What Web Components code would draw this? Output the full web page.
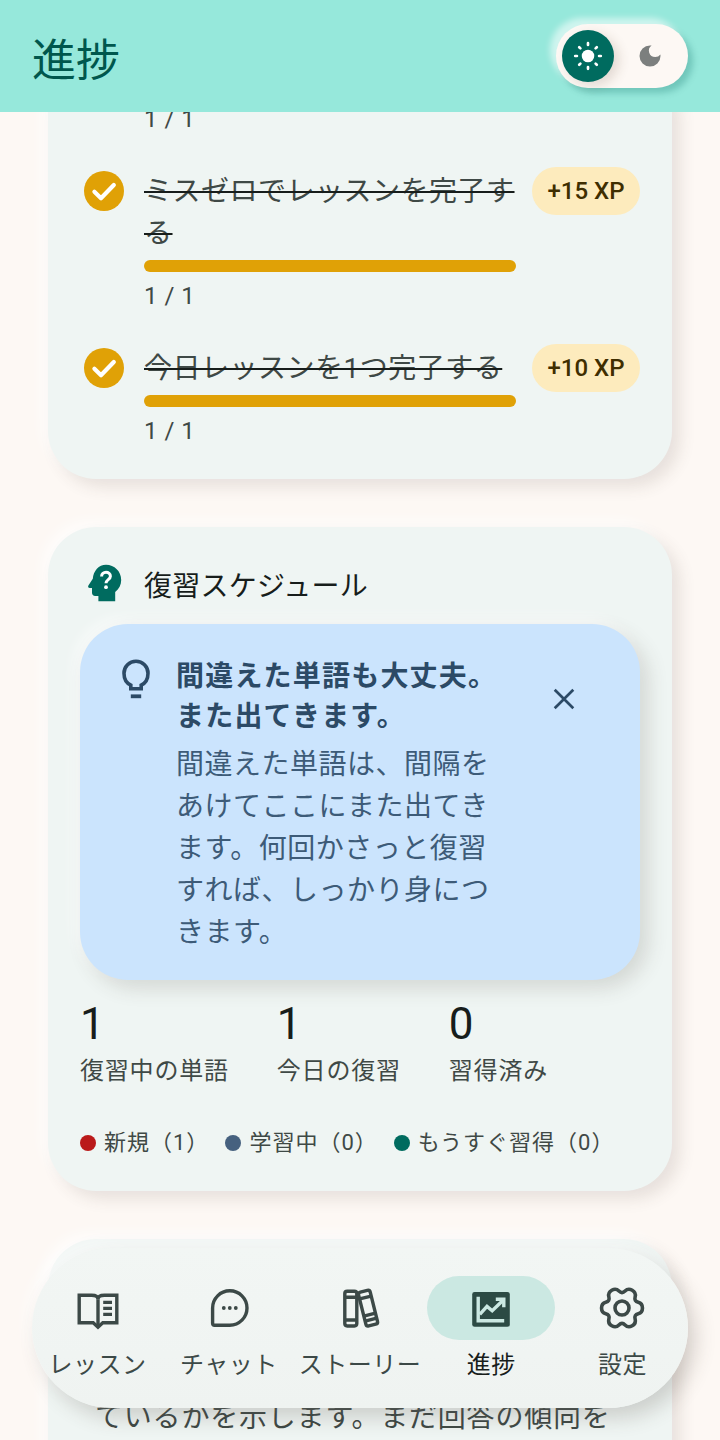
<!doctype html>
<html lang="ja"><head><meta charset="utf-8"><title>進捗</title>
<style>
html,body{margin:0;padding:0;background:#fdf8f4}
body{font-family:Roboto,"Noto Sans CJK JP",sans-serif;color:#171d1b}
</style></head><body>
<app-shell>
  <top-bar slot="top" heading="進捗"></top-bar>
  <surface-card class="quests">
    <quest-row clipped done="1" label=""></quest-row>
    <quest-row label="ミスゼロでレッスンを完了する" xp="+15 XP"></quest-row>
    <quest-row label="今日レッスンを1つ完了する" xp="+10 XP"></quest-row>
  </surface-card>
  <surface-card>
    <review-head>復習スケジュール</review-head>
    <tip-box heading="間違えた単語も大丈夫。また出てきます。">間違えた単語は、間隔をあけてここにまた出てきます。何回かさっと復習すれば、しっかり身につきます。</tip-box>
    <stat-row>
      <stat-item value="1" label="復習中の単語"></stat-item>
      <stat-item value="1" label="今日の復習"></stat-item>
      <stat-item value="0" label="習得済み"></stat-item>
    </stat-row>
    <legend-row>
      <legend-item color="#ba1a1a">新規（1）</legend-item>
      <legend-item color="#46617f">学習中（0）</legend-item>
      <legend-item color="#006b5f">もうすぐ習得（0）</legend-item>
    </legend-row>
  </surface-card>
  <surface-card class="last"><clip-text>ているかを示します。まだ回答の傾向を</clip-text></surface-card>
  <bottom-nav slot="nav">
    <nav-item icon="book" label="レッスン"></nav-item>
    <nav-item icon="chat" label="チャット"></nav-item>
    <nav-item icon="books" label="ストーリー"></nav-item>
    <nav-item icon="chart" label="進捗" active></nav-item>
    <nav-item icon="gear" label="設定"></nav-item>
  </bottom-nav>
</app-shell>
<script>
function gearPath(){
  const c=12,pts=[];
  for(let k=0;k<6;k++){const a=k*60;
    [[a-13,10.5],[a+13,10.5],[a+30,6.9]].forEach(([d,r])=>{const t=d*Math.PI/180;pts.push([c+r*Math.cos(t),c+r*Math.sin(t)])});
  }
  const mid=(p,q)=>[(p[0]+q[0])/2,(p[1]+q[1])/2],f=n=>n.toFixed(2);
  let s=mid(pts[pts.length-1],pts[0]),d=`M${f(s[0])} ${f(s[1])}`;
  pts.forEach((p,i)=>{const m=mid(p,pts[(i+1)%pts.length]);d+=`Q${f(p[0])} ${f(p[1])} ${f(m[0])} ${f(m[1])}`});
  return d+'z';
}
const ICONS={
 book:`<g fill="none" stroke="currentColor" stroke-width="1.7"><path d="M2.6 5.6h6.2c1.7 0 3.2.6 3.2 2 0-1.4 1.5-2 3.2-2h6.2v13.8h-7L12 21.6l-2.4-2.2h-7z"/><path d="M12 7.6v13"/><path d="M14.6 9.2h4.4M14.6 12.2h4.4M14.6 15.2h4.4"/></g>`,
 chat:`<path fill="none" stroke="currentColor" stroke-width="1.7" d="M12.4 3.4a8.6 8.6 0 0 1 0 17.2H4.8a1 1 0 0 1-1-1V12a8.6 8.6 0 0 1 8.6-8.6z"/><g fill="currentColor"><circle cx="9.4" cy="12" r=".95"/><circle cx="12.4" cy="12" r=".95"/><circle cx="15.4" cy="12" r=".95"/></g>`,
 books:`<g fill="none" stroke="currentColor" stroke-width="1.7"><rect x="4.4" y="3.6" width="6" height="17.4" rx="1.2"/><path d="M4.4 6.6h6M4.4 18h6"/><g transform="rotate(-14 16 12)"><rect x="13" y="3.4" width="6" height="17.4" rx="1.2"/><path d="M13 6.6h6M13 15.4h6M13 18h6"/></g></g>`,
 chart:`<rect x="2.6" y="4" width="18.8" height="17.4" rx="1.2" fill="currentColor"/><g fill="none" stroke="#cbe8e2" stroke-width="1.7"><path d="M5.6 6.4v12h13"/><path d="M6.4 15.2l3.6-4 2.6 2.2 5.2-5"/><path d="M14.4 7.6h4v4"/></g>`,
 gear:`<g fill="none" stroke="currentColor" stroke-width="1.8"><path d="${gearPath()}"/><circle cx="12" cy="12" r="3.5"/></g>`,
 head:`<path fill="currentColor" d="M13 2.4c4.2 0 7.6 3.3 7.6 7.6 0 2.4-1.1 4.5-3 6v4.6H9.2v-2.6H7.6c-1 0-1.6-.7-1.6-1.6V14H4.9c-.7 0-1.1-.7-.7-1.3L6.4 9.4C6.7 5.5 9.4 2.4 13 2.4z"/><g fill="none" stroke="#fff" stroke-width="1.5"><path d="M10.8 8.2c0-1.3 1-2.1 2.2-2.1s2.2.8 2.2 2c0 1.7-2.2 1.7-2.2 3.5"/></g><circle cx="13" cy="13.6" r=".95" fill="#fff"/>`,
 bulb:`<path fill="none" stroke="currentColor" stroke-width="1.8" d="M9.4 16.4v-1.8C7.4 13.6 6 11.4 6 8.6a6 6 0 0 1 12 0c0 2.8-1.4 5-3.4 6v1.8z"/><path fill="currentColor" d="M9.4 19.2h5.2v1.9H9.4z"/>`,
 close:`<path fill="none" stroke="currentColor" stroke-width="1.8" d="M5.8 5.8l12.4 12.4M18.2 5.8L5.8 18.2"/>`,
 check:`<circle cx="12" cy="12" r="10" fill="#e0a106"/><path fill="none" stroke="#fff" stroke-width="2.1" stroke-linecap="round" stroke-linejoin="round" d="M7.2 12.4l3.3 3.2 6.4-6.6"/>`,
 moon:`<path fill="currentColor" d="M12 3a9 9 0 1 0 9 9c0-.46-.04-.92-.1-1.36a5.39 5.39 0 0 1-4.4 2.26 5.4 5.4 0 0 1-3.14-9.8C13.92 3.04 12.46 3 12 3z"/>`,
 sun:`<circle cx="12" cy="12" r="4.7" fill="currentColor"/><g fill="none" stroke="currentColor" stroke-width="2" stroke-linecap="round"><path d="M12 2.4v1.3M12 20.3v1.3M2.4 12h1.3M20.3 12h1.3M5.4 5.4l.9.9M17.7 17.7l.9.9M5.4 18.6l.9-.9M17.7 6.3l.9-.9"/></g>`
};
class Base extends HTMLElement{
  css(){return''} html(){return'<slot></slot>'}
  connectedCallback(){ if(this.shadowRoot) return;
    this.attachShadow({mode:'open'}).innerHTML=`<style>${this.css()}</style>${this.html()}`; }
}
const def=(n,c)=>customElements.define(n,c);
def('ui-icon',class extends Base{
  css(){return`:host{display:block;width:var(--s,48px);height:var(--s,48px);flex:none}svg{display:block;width:100%;height:100%}`}
  html(){return`<svg viewBox="0 0 24 24" aria-hidden="true">${ICONS[this.getAttribute('name')]||''}</svg>`}
});
def('app-shell',class extends Base{
  css(){return`:host{display:block;position:relative;width:720px;height:1440px;overflow:hidden;background:#fdf8f4}
  .wrap{display:flex;flex-direction:column;height:100%}
  .scroll{flex:1;min-height:0;overflow:hidden;display:flex;flex-direction:column;gap:48px;padding:0 48px}
  ::slotted(.quests){margin-top:-48px}
  ::slotted(top-bar){position:relative;z-index:2}`}
  html(){return`<div class="wrap"><slot name="top"></slot><div class="scroll"><slot></slot></div></div><slot name="nav"></slot>`}
});
def('top-bar',class extends Base{
  css(){return`:host{display:flex;flex:none;align-items:center;justify-content:space-between;height:112px;padding:0 32px;box-sizing:border-box;background:#96e8db}
  h1{margin:10px 0 0;font:400 44px/56px Roboto,"Noto Sans CJK JP",sans-serif;color:#00574d}`}
  html(){return`<h1>${this.getAttribute('heading')}</h1><theme-toggle></theme-toggle>`}
});
def('theme-toggle',class extends Base{
  css(){return`:host{display:flex;align-items:center;width:132px;height:64px;box-sizing:border-box;padding:0 6px;border-radius:32px;background:#fdf8f4;
   box-shadow:-6px -6px 6px rgba(255,255,255,.55),5px 5px 6px rgba(0,100,90,.25)}
   .on{width:52px;height:52px;border-radius:50%;background:#006b5f;color:#fff;display:flex;align-items:center;justify-content:center;box-shadow:5px 4px 12px rgba(90,60,40,.16)}
   .off{flex:1;display:flex;justify-content:center;color:#7c7f7e;padding-left:4px}
   ui-icon{--s:32px}.off ui-icon{--s:28px}`}
  html(){return`<div class="on"><ui-icon name="sun"></ui-icon></div><div class="off"><ui-icon name="moon"></ui-icon></div>`}
});
def('surface-card',class extends Base{
  css(){return`:host{display:block;flex:none;box-sizing:border-box;padding:32px;border-radius:48px;background:#eff5f3;
   box-shadow:8px 8px 16px rgba(70,60,50,.12),-6px -6px 14px rgba(255,255,255,.7)}
   :host(.last){height:300px;padding:158px 0 0 47px}`}
});
def('quest-row',class extends Base{
  css(){return`:host{display:flex;align-items:flex-start;gap:16px;margin-bottom:32.5px}
   :host([clipped]){margin-bottom:32px}
   :host(:last-child){margin-bottom:0}
   .m{flex:1;min-width:0;padding-top:4px}
   .t{font-size:28px;line-height:41.5px;letter-spacing:.5px;color:#3f4946;text-decoration:line-through;text-decoration-color:#171d1b;text-decoration-thickness:2px}
   .b{height:12px;border-radius:6px;background:#e0a106;margin-top:5.5px}
   .c{font-size:24px;line-height:32px;letter-spacing:.5px;color:#3f4946;margin-top:8px}
   .x{flex:none;height:48px;width:108px;box-sizing:border-box;border-radius:24px;background:#fdebbd;color:#3f2e00;font:500 24px/48px Roboto,sans-serif;text-align:center}`}
  html(){
    const l=this.getAttribute('label')||'',x=this.getAttribute('xp');
    if(this.hasAttribute('clipped')) return `<div style="width:48px;flex:none"></div><div class="m" style="padding-top:0"><div class="c" style="margin-top:7px">1 / 1</div></div>`;
    return `<ui-icon name="check"></ui-icon><div class="m"><div class="t">${l}</div><div class="b"></div><div class="c">1 / 1</div></div><div class="x">${x}</div>`}
});
def('review-head',class extends Base{
  css(){return`:host{display:flex;align-items:center;gap:16px;height:48px;margin:1px 0 16px;font-size:28px;letter-spacing:.25px;color:#171d1b}ui-icon{color:#006b5f}span{margin-top:-1px}`}
  html(){return`<ui-icon name="head"></ui-icon><span><slot></slot></span>`}
});
def('tip-box',class extends Base{
  css(){return`:host{display:flex;align-items:flex-start;box-sizing:border-box;height:356px;padding:33px 40px 28px 32px;gap:16px;border-radius:48px;background:#cbe4fd;color:#2c4a66;
   box-shadow:8px 8px 20px rgba(70,60,50,.16),-6px -6px 14px rgba(255,255,255,.6)}
   .m{flex:1;min-width:0}
   h2{margin:0;font:700 28px/40px Roboto,"Noto Sans CJK JP",sans-serif;letter-spacing:1.2px;color:#2c4a66}
   p{margin:7px 0 0;font-size:28px;line-height:42px;letter-spacing:.5px;color:#3d5b78}
   .i{margin-top:-1px}.cl{width:72px;height:72px;flex:none;display:flex;align-items:center;justify-content:center;margin-top:6px}
   .cl ui-icon{--s:36px}`}
  html(){const h=this.getAttribute('heading');
   return `<ui-icon class="i" name="bulb"></ui-icon><div class="m"><h2>${h}</h2><p><slot></slot></p></div><div class="cl"><ui-icon name="close"></ui-icon></div>`}
});
def('stat-row',class extends Base{css(){return`:host{display:flex;gap:48px;margin-top:16px}`}});
def('stat-item',class extends Base{
  css(){return`:host{display:block}.v{font-size:44px;line-height:56px;color:#171d1b}.l{font-size:24px;line-height:32px;letter-spacing:.8px;color:#3f4946;margin-top:3px}`}
  html(){return`<div class="v">${this.getAttribute('value')}</div><div class="l">${this.getAttribute('label')}</div>`}
});
def('legend-row',class extends Base{css(){return`:host{display:flex;gap:16px;margin-top:40px}`}});
def('legend-item',class extends Base{
  css(){return`:host{display:flex;align-items:center;gap:8px;font-size:22px;letter-spacing:1px;line-height:32px;white-space:nowrap;color:#3f4946}
   i{width:16px;height:16px;border-radius:50%;flex:none}`}
  html(){return`<i style="background:${this.getAttribute('color')}"></i><span><slot></slot></span>`}
});
def('clip-text',class extends Base{
  css(){return`:host{display:block;font-size:28px;line-height:42px;letter-spacing:.8px;color:#3f4946}`}
});
def('bottom-nav',class extends Base{
  css(){return`:host{position:absolute;left:32px;right:32px;bottom:32px;height:160px;display:grid;grid-template-columns:repeat(5,1fr);border-radius:80px;z-index:3;
   background:linear-gradient(#f2f6f4,#eff3f1);
   box-shadow:8px 10px 20px rgba(70,60,50,.2),-6px -8px 16px rgba(255,255,255,.55)}`}
});
def('nav-item',class extends Base{
  css(){return`:host{display:flex;flex-direction:column;align-items:center;padding-top:28px;color:#3c4947;min-width:0}
   .p{width:128px;height:64px;border-radius:32px;display:flex;align-items:center;justify-content:center}
   :host([active]) .p{background:#cbe8e2}
   :host([active]) ui-icon{color:#2c4a44}
   :host([active]) .l{color:#171d1b}
   .l{margin-top:9px;font-size:24px;line-height:32px;letter-spacing:.5px;white-space:nowrap}`}
  html(){return`<div class="p"><ui-icon name="${this.getAttribute('icon')}"></ui-icon></div><div class="l">${this.getAttribute('label')}</div>`}
});
</script>
</body></html>
